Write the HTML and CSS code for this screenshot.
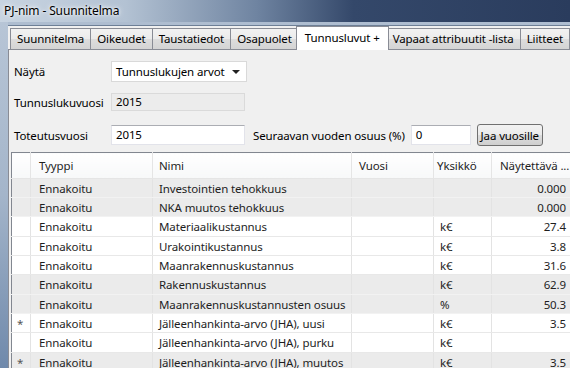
FILE: index.html
```html
<!DOCTYPE html>
<html lang="fi">
<head>
    <meta charset="UTF-8">
    <title>PJ-nim - Suunnitelma</title>
    <link rel="stylesheet" href="styles.css">
</head>
<body>

    <div class="window">
        <div class="titlebar">
            <span class="title">PJ-nim - Suunnitelma</span>
        </div>

        <div class="frame">
            <div class="frame-edge"></div>

            <div class="client">
                <!-- Välilehdet -->
                <div class="tabs">
                    <div class="tab">Suunnitelma</div>
                    <div class="tab">Oikeudet</div>
                    <div class="tab">Taustatiedot</div>
                    <div class="tab">Osapuolet</div>
                    <div class="tab active">Tunnusluvut +</div>
                    <div class="tab">Vapaat attribuutit -lista</div>
                    <div class="tab">Liitteet</div>
                    <div class="tab">P</div>
                </div>

                <div class="panel">
                    <div class="form-row first">
                        <span class="label">Näytä</span>
                        <div class="select">
                            <span>Tunnuslukujen arvot</span>
                            <span class="arrow"></span>
                        </div>
                    </div>

                    <div class="form-row second">
                        <span class="label">Tunnuslukuvuosi</span>
                        <div class="field readonly">2015</div>
                    </div>

                    <div class="form-row third">
                        <span class="label">Toteutusvuosi</span>
                        <div class="field">2015</div>
                        <span class="label-inline">Seuraavan vuoden osuus (%)</span>
                        <div class="field small">0</div>
                        <button class="btn">Jaa vuosille</button>
                    </div>

                    <!-- Tunnuslukutaulukko -->
                    <table class="grid">
                        <colgroup>
                            <col class="c-head">
                            <col class="c-type">
                            <col class="c-name">
                            <col class="c-year">
                            <col class="c-unit">
                            <col class="c-value">
                        </colgroup>
                        <thead>
                            <tr>
                                <th></th>
                                <th class="h-type">Tyyppi</th>
                                <th>Nimi</th>
                                <th class="h-year">Vuosi</th>
                                <th class="h-unit">Yksikkö</th>
                                <th class="h-value">Näytettävä ...</th>
                            </tr>
                        </thead>
                        <tbody>
                            <tr class="shade">
                                <td></td><td>Ennakoitu</td><td>Investointien tehokkuus</td><td></td><td></td><td class="num">0.000</td>
                            </tr>
                            <tr class="shade">
                                <td></td><td>Ennakoitu</td><td>NKA muutos tehokkuus</td><td></td><td></td><td class="num">0.000</td>
                            </tr>
                            <tr>
                                <td></td><td>Ennakoitu</td><td>Materiaalikustannus</td><td></td><td>k€</td><td class="num">27.4</td>
                            </tr>
                            <tr>
                                <td></td><td>Ennakoitu</td><td>Urakointikustannus</td><td></td><td>k€</td><td class="num">3.8</td>
                            </tr>
                            <tr>
                                <td></td><td>Ennakoitu</td><td>Maanrakennuskustannus</td><td></td><td>k€</td><td class="num">31.6</td>
                            </tr>
                            <tr class="shade">
                                <td></td><td>Ennakoitu</td><td>Rakennuskustannus</td><td></td><td>k€</td><td class="num">62.9</td>
                            </tr>
                            <tr class="shade">
                                <td></td><td>Ennakoitu</td><td>Maanrakennuskustannusten osuus</td><td></td><td>%</td><td class="num">50.3</td>
                            </tr>
                            <tr>
                                <td class="mark">*</td><td>Ennakoitu</td><td>Jälleenhankinta-arvo (JHA), uusi</td><td></td><td>k€</td><td class="num">3.5</td>
                            </tr>
                            <tr>
                                <td></td><td>Ennakoitu</td><td>Jälleenhankinta-arvo (JHA), purku</td><td></td><td>k€</td><td class="num"></td>
                            </tr>
                            <tr class="shade">
                                <td class="mark">*</td><td>Ennakoitu</td><td>Jälleenhankinta-arvo (JHA), muutos</td><td></td><td>k€</td><td class="num">3.5</td>
                            </tr>
                        </tbody>
                    </table>
                </div>
            </div>
        </div>
    </div>

</body>
</html>
```

FILE: styles.css
```css
/* Yleiset */
body {
    margin: 0;
    padding: 0;
    width: 570px;
    height: 368px;
    overflow: hidden;
    font-family: 'Noto Sans', sans-serif;
    font-size: 11.5px;
    letter-spacing: -0.12px;
    color: #000;
}

.window {
    display: flex;
    flex-direction: column;
    height: 368px;
}

/* Otsikkopalkki */
.titlebar {
    height: 22px;
    flex-shrink: 0;
    display: flex;
    align-items: center;
    padding-left: 4px;
    background: linear-gradient(to right, #c8d4e1 0%, #b3c2d3 22%, #6f84a1 45%, #34486a 62%, #2a3c5d 100%);
}

.title {
    color: #000;
    font-size: 12px;
    text-shadow: 0 0 6px #fff, 0 0 3px #fff;
    padding-bottom: 2px;
}

.frame {
    flex: 1;
    display: flex;
    min-height: 0;
    background: linear-gradient(#aebdd0, #a5b6cb);
}

.frame-edge {
    width: 8px;
    flex-shrink: 0;
    background: linear-gradient(#b7c5d6 0%, #a4b5ca 50%, #6f89ab 100%);
}

.client {
    flex: 1;
    display: flex;
    flex-direction: column;
    background-color: #f0f0f0;
    border-top: 1px solid #6d7f96;
    margin-top: 3px;
    min-width: 0;
    overflow: hidden;
}

/* Välilehdet */
.tabs {
    display: flex;
    align-items: flex-end;
    height: 23px;
    padding-left: 3px;
    white-space: nowrap;
}

.tab {
    height: 21px;
    line-height: 20px;
    padding: 0 6px;
    margin-left: -1px;
    border: 1px solid #898c95;
    border-bottom: none;
    box-sizing: border-box;
    background: linear-gradient(#f2f2f2 0%, #ebebeb 50%, #dddddd 50%, #d4d4d4 100%);
    flex-shrink: 0;
}

.tab.active {
    position: relative;
    z-index: 1;
    height: 24px;
    line-height: 22px;
    margin: 0 -2px -1px -3px;
    padding: 0 8px;
    background: #fff;
}

.panel {
    flex: 1;
    border-top: 1px solid #898c95;
    border-left: 1px solid #898c95;
    background-color: #f0f0f0;
    padding: 0 0 0 5px;
}

/* Lomake */
.form-row {
    display: flex;
    align-items: center;
    white-space: nowrap;
}

.form-row.first {
    margin-top: 11px;
    height: 21px;
}

.form-row.second {
    margin-top: 11px;
    height: 18px;
}

.form-row.third {
    margin-top: 13px;
    height: 22px;
}

.label {
    width: 97px;
    flex-shrink: 0;
}

.select {
    width: 136px;
    height: 21px;
    box-sizing: border-box;
    border: 1px solid #d9d9d9;
    background-color: #fff;
    display: flex;
    align-items: center;
    justify-content: space-between;
    padding: 0 6px 0 4px;
}

.arrow {
    width: 0;
    height: 0;
    border-left: 4px solid transparent;
    border-right: 4px solid transparent;
    border-top: 4px solid #222;
    margin-top: 1px;
}

.field {
    width: 134px;
    height: 20px;
    line-height: 18px;
    box-sizing: border-box;
    border: 1px solid #e2e3ea;
    border-top-color: #abadb3;
    background-color: #fff;
    padding-left: 4px;
    flex-shrink: 0;
}

.field.readonly {
    height: 18px;
    line-height: 16px;
    background-color: #ececec;
    border-color: #dadada;
}

.field.small {
    width: 60px;
}

.label-inline {
    margin: 0 6px 0 8px;
}

.btn {
    margin-left: 6px;
    width: 66px;
    height: 22px;
    padding: 0;
    flex-shrink: 0;
    font-family: inherit;
    font-size: 11.5px;
    letter-spacing: -0.12px;
    color: #000;
    border: 1px solid #707070;
    border-radius: 3px;
    background: linear-gradient(#f2f2f2 0%, #ebebeb 50%, #dddddd 50%, #cfcfcf 100%);
}

/* Taulukko */
.grid {
    margin-top: 6px;
    margin-left: -3px;
    border-collapse: collapse;
    table-layout: fixed;
    width: 570px;
    border-top: 1px solid #828790;
    border-left: 1px solid #828790;
    background-color: #fff;
}

.c-head { width: 19px; }
.c-type { width: 122px; }
.c-name { width: 199px; }
.c-year { width: 82px; }
.c-unit { width: 58px; }
.c-value { width: 90px; }

.grid th {
    height: 25px;
    padding: 0 0 0 6px;
    font-weight: normal;
    text-align: left;
    background: linear-gradient(#ffffff, #f7f8f9);
    border-right: 1px solid #e5e5e5;
    border-bottom: 1px solid #e5e5e5;
    color: #1e1e1e;
    white-space: nowrap;
    overflow: hidden;
}

.grid th.h-type { padding-left: 8px; }
.grid th.h-year { padding-left: 7px; }
.grid th.h-unit { padding-left: 3px; }
.grid th.h-value { padding-left: 8px; }

.grid td {
    height: 18px;
    padding: 0 0 0 6px;
    border-right: 1px solid #e3e3e3;
    border-bottom: 1px solid #e8e8e8;
    white-space: nowrap;
    overflow: hidden;
    color: #1e1e1e;
}

.grid tbody tr:nth-child(3n) td {
    height: 19px;
}

.grid td:nth-child(2) { padding-left: 8px; }

.grid tr.shade td {
    background-color: #ebebeb;
    border-bottom-color: #f2f2f2;
}

.grid td.num {
    text-align: right;
    padding-right: 15px;
}

.grid td.mark {
    padding-left: 5px;
    color: #555;
}
```
